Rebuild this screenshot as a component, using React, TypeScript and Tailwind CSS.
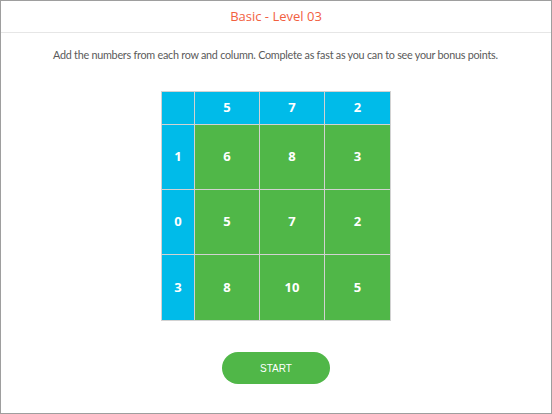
const cols = [5, 7, 2];
const rows = [
  { head: 1, cells: [6, 8, 3] },
  { head: 0, cells: [5, 7, 2] },
  { head: 3, cells: [8, 10, 5] },
];

export default function App() {
  return (
    <div
      className="flex h-[414px] w-[552px] flex-col border border-[#9e9e9e] bg-white"
      style={{ fontFamily: '"Open Sans", "Noto Sans", sans-serif' }}
    >
      <header className="flex h-[32px] shrink-0 items-center justify-center border-b border-[#e6e6e6]">
        <h1 className="text-[13px] text-[#f2603f]">Basic - Level 03</h1>
      </header>

      <p
        className="mt-[14px] whitespace-nowrap pl-[52px] text-[10.8px] leading-[16px] tracking-[-0.25px] text-[#5a5a5a]"
        style={{ fontFamily: 'Lato, "Open Sans", sans-serif' }}
      >
        Add the numbers from each row and column. Complete as fast as you can to see your bonus points.
      </p>

      <div className="mt-[28px] flex justify-center">
        <div className="grid grid-cols-[32px_64px_64px_65px] grid-rows-[32px_64px_64px_65px] gap-px bg-[#d2d2d2] p-px text-[13px] font-bold text-white">
          <div className="bg-[#00bbe9]" />
          {cols.map((c, i) => (
            <div key={i} className="flex items-center justify-center bg-[#00bbe9]">
              {c}
            </div>
          ))}
          {rows.map((r, i) => (
            <>
              <div key={`h${i}`} className="flex items-center justify-center bg-[#00bbe9]">
                {r.head}
              </div>
              {r.cells.map((v, j) => (
                <div key={`${i}-${j}`} className="flex items-center justify-center bg-[#50b748]">
                  {v}
                </div>
              ))}
            </>
          ))}
        </div>
      </div>

      <div className="mt-[31px] flex justify-center">
        <button
          type="button"
          className="h-[32px] w-[108px] rounded-full bg-[#50b748] text-[10px] font-medium text-white"
          style={{ fontFamily: '"Liberation Sans", Arial, sans-serif' }}
        >
          START
        </button>
      </div>
    </div>
  );
}
